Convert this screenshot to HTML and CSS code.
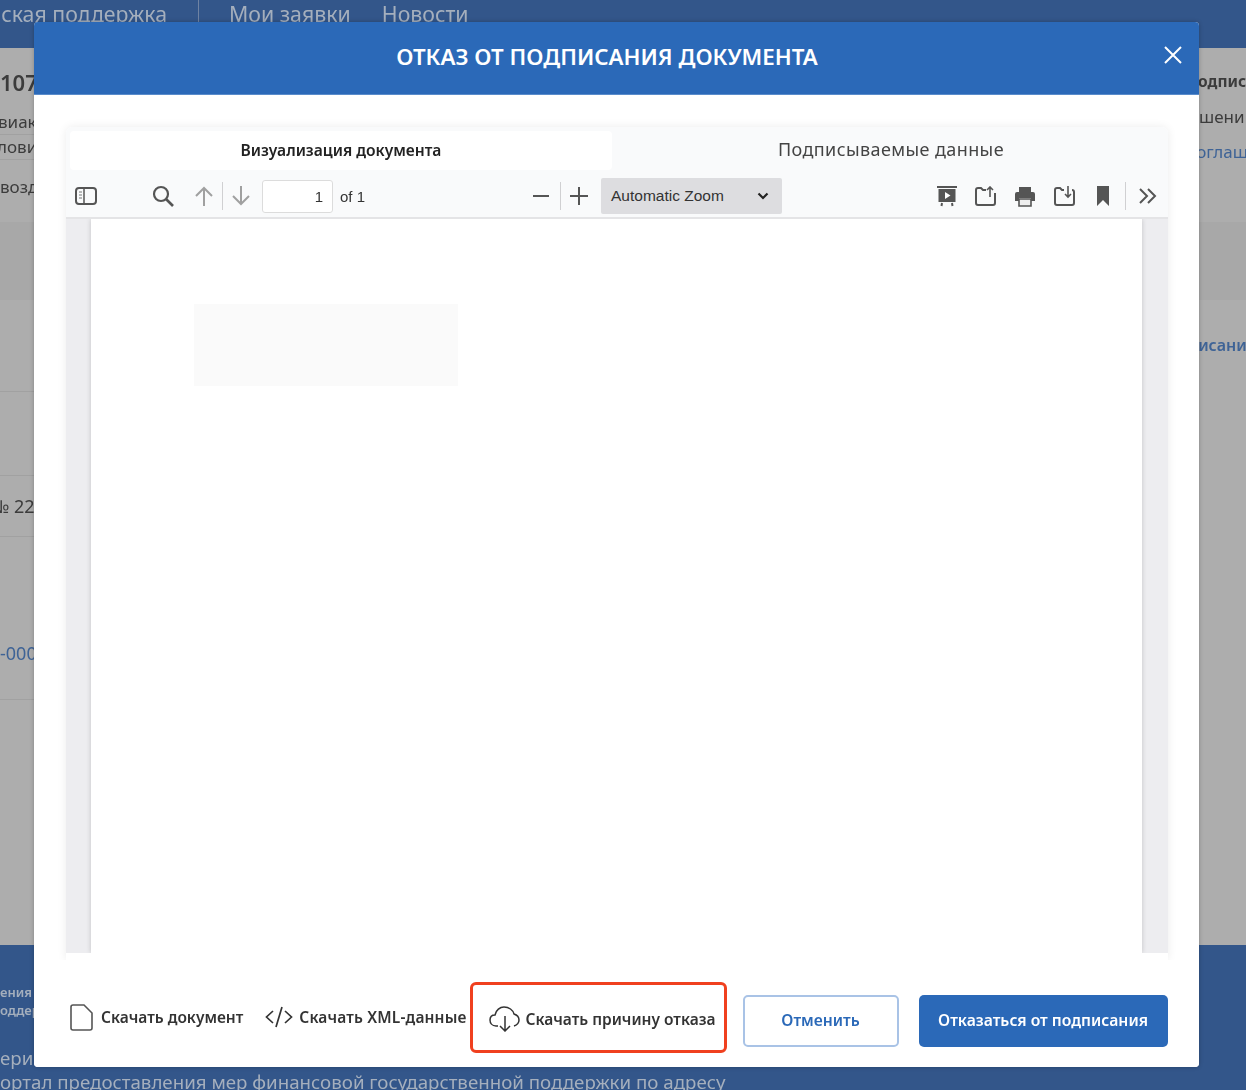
FILE: index.html
```html
<!DOCTYPE html>
<html>
<head>
    <title>Отказ от подписания документа</title>
    <link rel="stylesheet" href="styles.css">
</head>
<body>
    <div class="page">
        <nav class="topnav">
            <span class="nav-first">ская поддержка</span>
            <span class="nav-sep"></span>
            <span class="nav-link">Мои заявки</span>
            <span class="nav-link">Новости</span>
        </nav>
        <div class="content">
            <div class="col-left">
                <div class="cell num">107</div>
                <div class="cell avia line">виак</div>
                <div class="cell cond line">лови</div>
                <div class="cell vozd">возд</div>
                <div class="cell band"></div>
                <div class="cell row92 line"></div>
                <div class="cell row84 line"></div>
                <div class="cell dogovor line">№ 22</div>
                <div class="cell link-num line">-000</div>
            </div>
            <div class="col-right">
                <div class="cell podp">подпис</div>
                <div class="cell resh">шени</div>
                <div class="cell sogl">соглаш</div>
                <div class="cell band-right"></div>
                <div class="cell podp-link">писани</div>
            </div>
        </div>
        <footer class="bottom">
            <div class="small-text">ения</div>
            <div class="small-text">оддер</div>
            <div class="big-text first">ериал</div>
            <div class="big-text">ортал предоставления мер финансовой государственной поддержки по адресу</div>
        </footer>
    </div>

    <div class="modal">
        <div class="modal-head">
            <h1>ОТКАЗ ОТ ПОДПИСАНИЯ ДОКУМЕНТА</h1>
            <svg class="close" width="18" height="18" viewBox="0 0 18 18"><path d="M1 1 L17 17 M17 1 L1 17" stroke="#fff" stroke-width="2" fill="none"/></svg>
        </div>
        <div class="modal-body">
            <div class="viewer">
                <div class="tabs">
                    <div class="tab active">Визуализация документа</div>
                    <div class="tab">Подписываемые данные</div>
                </div>
                <div class="toolbar">
                    <svg class="tb-sidebar" width="22" height="18" viewBox="0 0 22 18"><rect x="1" y="1" width="20" height="16" rx="3" fill="none" stroke="#555" stroke-width="2"/><path d="M9 1 V17" stroke="#555" stroke-width="1.5"/><path d="M4 5 H7 M4 8 H7 M4 11 H7" stroke="#777" stroke-width="1.2"/></svg>
                    <svg class="tb-search" width="24" height="24" viewBox="0 0 24 24"><circle cx="10" cy="10" r="7" fill="none" stroke="#555" stroke-width="2.2"/><path d="M15 15 L22 22" stroke="#555" stroke-width="2.6"/></svg>
                    <svg class="tb-up" width="20" height="20" viewBox="0 0 20 20"><path d="M10 20 V2 M2 10 L10 2 L18 10" fill="none" stroke="#a0a0a0" stroke-width="2"/></svg>
                    <span class="tb-sep sep-page"></span>
                    <svg class="tb-down" width="20" height="20" viewBox="0 0 20 20"><path d="M10 0 V18 M2 10 L10 18 L18 10" fill="none" stroke="#a0a0a0" stroke-width="2"/></svg>
                    <div class="page-input">1</div>
                    <span class="page-of">of 1</span>
                    <svg class="tb-minus" width="16" height="16" viewBox="0 0 16 16"><path d="M0 8 H16" stroke="#555" stroke-width="2"/></svg>
                    <span class="tb-sep sep-zoom"></span>
                    <svg class="tb-plus" width="18" height="18" viewBox="0 0 18 18"><path d="M0 9 H18 M9 0 V18" stroke="#555" stroke-width="2"/></svg>
                    <div class="zoom-select">
                        <span>Automatic Zoom</span>
                        <svg width="12" height="8" viewBox="0 0 12 8"><path d="M1.5 1.5 L6 6 L10.5 1.5" fill="none" stroke="#222" stroke-width="2.2"/></svg>
                    </div>
                    <div class="tb-right">
                        <svg width="20" height="22" viewBox="0 0 20 22"><path d="M0 2 H20" stroke="#555" stroke-width="2"/><rect x="1.5" y="4" width="17" height="13" fill="#555"/><path d="M8 7 L13.5 10.5 L8 14 Z" fill="#fff"/><path d="M5 18 L4.5 21 M15 18 L15.5 21" stroke="#555" stroke-width="2"/></svg>
                        <svg width="21" height="20" viewBox="0 0 21 20"><path d="M11 4 H8 L6 2 H3 Q1 2 1 4 V17 Q1 19 3 19 H18 Q20 19 20 17 V7" fill="none" stroke="#555" stroke-width="2"/><path d="M15 11 V1 M12 4 L15 1 L18 4" fill="none" stroke="#555" stroke-width="1.6"/></svg>
                        <svg width="22" height="21" viewBox="0 0 22 21"><path d="M5 6 V1 H17 V6 Z" fill="#555"/><path d="M3 6 H19 Q21 6 21 8 V15 H17 V12 H5 V15 H1 V8 Q1 6 3 6 Z" fill="#555"/><path d="M5 13 H17 V20 H5 Z" fill="#eee" stroke="#555" stroke-width="1.6"/></svg>
                        <svg width="21" height="20" viewBox="0 0 21 20"><path d="M10 4 H8 L6 2 H3 Q1 2 1 4 V17 Q1 19 3 19 H18 Q20 19 20 17 V6 Q20 4 18 4" fill="none" stroke="#555" stroke-width="2"/><path d="M14 0 V11 M11 8 L14 11 L17 8" fill="none" stroke="#555" stroke-width="1.6"/></svg>
                        <svg class="tb-bookmark" width="12" height="20" viewBox="0 0 12 20"><path d="M0 0 H12 V20 L6 14 L0 20 Z" fill="#555"/></svg>
                        <span class="tb-sep sep-more"></span>
                        <svg class="tb-more" width="18" height="16" viewBox="0 0 18 16"><path d="M1 1 L8 8 L1 15 M9 1 L16 8 L9 15" fill="none" stroke="#555" stroke-width="2"/></svg>
                    </div>
                </div>
                <div class="doc-area">
                    <div class="doc-page">
                        <div class="doc-stamp"></div>
                    </div>
                </div>
            </div>
        </div>
        <div class="modal-foot">
            <a class="dl-link dl-doc">
                <svg width="23" height="27" viewBox="0 0 23 27"><path d="M3 1 H14 L22 9 V24 Q22 26 20 26 H3 Q1 26 1 24 V3 Q1 1 3 1 Z" fill="none" stroke="#555" stroke-width="1.6"/></svg>
                Скачать документ
            </a>
            <a class="dl-link dl-xml">
                <svg width="28" height="22" viewBox="0 0 28 22"><path d="M8 5 L1.5 11 L8 17 M20 5 L26.5 11 L20 17 M17 1 L11 21" fill="none" stroke="#333" stroke-width="1.7"/></svg>
                Скачать XML-данные
            </a>
            <a class="dl-link dl-reason">
                <svg width="31" height="26" viewBox="0 0 31 26"><path d="M9 20 H7 C3 20 1 17 1 14 C1 11 3 9 6 9 C7 4 11 1 15 1 C20 1 24 4 25 8 C28 9 30 11 30 14 C30 17 28 19 25 20" fill="none" stroke="#333" stroke-width="1.5"/><path d="M16 10 V25 M11 20 L16 25 L21 20" fill="none" stroke="#333" stroke-width="1.5"/></svg>
                Скачать причину отказа
            </a>
            <button class="btn btn-cancel">Отменить</button>
            <button class="btn btn-reject">Отказаться от подписания</button>
        </div>
    </div>
</body>
</html>
```

FILE: styles.css
```css
* {
    box-sizing: border-box;
}
body {
    margin: 0;
    width: 1246px;
    height: 1090px;
    overflow: hidden;
    position: relative;
    font-family: "Noto Sans", sans-serif;
    color: #222;
    background-color: #adadad;
}

/* dimmed page behind the dialog */
.page {
    height: 1090px;
    display: flex;
    flex-direction: column;
    filter: blur(0.5px);
}
.topnav {
    height: 48px;
    flex: none;
    background-color: #33568a;
    color: #a5afbd;
    font-size: 21.3px;
    display: flex;
    align-items: flex-start;
    overflow: hidden;
    white-space: nowrap;
}
.nav-first {
    width: 167px;
    flex: none;
    text-align: right;
    line-height: 27px;
}
.nav-sep {
    width: 1px;
    height: 22px;
    margin: 0 30px 0 31px;
    background-color: #6f83a3;
}
.nav-link {
    margin-right: 31px;
    line-height: 27px;
}
.content {
    height: 897px;
    flex: none;
    display: flex;
    justify-content: space-between;
    background-color: #adadad;
    color: #3c3c3c;
    font-size: 17px;
    white-space: nowrap;
}
.col-left {
    width: 40px;
    overflow: hidden;
}
.col-right {
    width: 58px;
    overflow: hidden;
}
.cell {
    line-height: 24px;
}
.line {
    border-bottom: 1px solid #a1a1a1;
}
.num {
    height: 60px;
    padding-top: 20px;
    font-size: 22px;
    font-weight: 600;
    line-height: 28px;
}
.avia {
    height: 27px;
    padding-top: 2px;
    text-indent: -2px;
}
.cond {
    height: 25px;
    text-indent: -3px;
}
.vozd {
    height: 62px;
    padding-top: 15px;
}
.band {
    height: 78px;
    background-color: #a8a8a8;
}
.row92 {
    height: 92px;
}
.row84 {
    height: 84px;
}
.dogovor {
    height: 61px;
    line-height: 60px;
    text-indent: -9px;
    font-size: 18px;
}
.link-num {
    height: 163px;
    padding-top: 104px;
    color: #3e6396;
    font-size: 18px;
}
.podp {
    height: 45px;
    padding-top: 21px;
    font-weight: 700;
    font-size: 15.5px;
}
.resh {
    height: 36px;
    padding-top: 12px;
    padding-left: 11px;
}
.sogl {
    height: 93px;
    padding-top: 11px;
    color: #3e6396;
}
.band-right {
    height: 78px;
    background-color: #a8a8a8;
}
.podp-link {
    padding-top: 33px;
    color: #3e6396;
    font-weight: 600;
    font-size: 16px;
}
.bottom {
    flex: 1;
    background-color: #33568a;
    color: #a5afbd;
    white-space: nowrap;
    overflow: hidden;
}
.small-text {
    font-size: 13px;
    font-weight: 600;
    line-height: 18px;
}
.small-text:first-child {
    margin-top: 38px;
}
.big-text {
    font-size: 18.72px;
    line-height: 24px;
}
.big-text.first {
    margin-top: 27px;
}

/* dialog */
.modal {
    position: absolute;
    left: 34px;
    top: 22px;
    width: 1165px;
    height: 1045px;
    background-color: #fff;
    border-radius: 4px;
    display: flex;
    flex-direction: column;
    overflow: hidden;
    box-shadow: 0 0 4px rgba(0, 0, 0, 0.25);
    filter: blur(0.4px);
}
.modal-head {
    height: 73px;
    flex: none;
    display: flex;
    align-items: center;
    padding: 0 17px 3px 0;
    background-color: #2b69b8;
    border-bottom: 1px solid #5a8ccb;
}
.modal-head h1 {
    flex: 1;
    margin: 0;
    padding-left: 16px;
    text-align: center;
    color: #fff;
    font-size: 22.3px;
    font-weight: 600;
}
.close {
    margin-top: -3px;
}
.modal-body {
    height: 865px;
    flex: none;
    padding: 32px 31px 0 32px;
}
.viewer {
    height: 833px;
    background-color: #fff;
    box-shadow: 0 0 10px rgba(0, 0, 0, 0.08);
    border-radius: 6px 6px 0 0;
}
.tabs {
    display: flex;
    height: 43px;
    padding: 4px 0 0 4px;
    background-color: #f9fafb;
    border-radius: 6px 6px 0 0;
}
.tab {
    flex: 1;
    text-align: center;
    line-height: 36px;
    font-size: 18px;
    letter-spacing: 0.4px;
    color: #444;
}
.tab.active {
    flex: none;
    width: 542px;
    background-color: #fff;
    color: #222;
    font-weight: 600;
    font-size: 15.6px;
    letter-spacing: 0;
    line-height: 38px;
    border-radius: 4px;
    margin-right: 2px;
}
.toolbar {
    height: 49px;
    padding-top: 5px;
    display: flex;
    align-items: center;
    background-color: #f9fafb;
    border-bottom: 2px solid #e4e4e6;
    font-family: "Liberation Sans", Arial, sans-serif;
}
.toolbar svg {
    flex: none;
}
.tb-sidebar {
    margin-left: 9px;
}
.tb-search {
    margin-left: 54px;
}
.tb-up {
    margin-left: 19px;
}
.tb-sep {
    width: 1px;
    height: 28px;
    flex: none;
    background-color: #d0d0d2;
}
.sep-page {
    margin-left: 8px;
}
.tb-down {
    margin-left: 8px;
}
.page-input {
    width: 71px;
    height: 33px;
    margin-left: 11px;
    padding-right: 9px;
    background-color: #fff;
    border: 1px solid #dcdcdc;
    border-radius: 3px;
    text-align: right;
    font-size: 15px;
    line-height: 31px;
    color: #333;
}
.page-of {
    margin-left: 7px;
    font-size: 15px;
    color: #333;
}
.tb-minus {
    margin-left: 168px;
}
.sep-zoom {
    margin-left: 11px;
}
.tb-plus {
    margin-left: 9px;
}
.zoom-select {
    width: 181px;
    height: 36px;
    margin-left: 13px;
    padding: 0 13px 0 10px;
    display: flex;
    align-items: center;
    justify-content: space-between;
    background-color: #dddde0;
    border-radius: 2px;
    font-size: 15.5px;
    color: #333;
}
.tb-right {
    margin-left: auto;
    padding-right: 11px;
    display: flex;
    align-items: center;
    gap: 18px;
}
.tb-bookmark {
    margin-left: 4px;
}
.sep-more {
    margin-left: -2px;
}
.tb-more {
    margin-left: -5px;
}
.doc-area {
    height: 734px;
    padding: 0 26px 0 25px;
    background-color: #ededf0;
    overflow: hidden;
}
.doc-page {
    height: 734px;
    padding: 85px 0 0 103px;
    background-color: #fff;
    box-shadow: 0 0 5px rgba(0, 0, 0, 0.18);
}
.doc-stamp {
    width: 264px;
    height: 82px;
    background-color: #fafafa;
}
.modal-foot {
    flex: 1;
    display: flex;
    align-items: center;
    padding: 15px 31px 0 36px;
    background-color: #fff;
}
.dl-link {
    display: flex;
    align-items: center;
    font-size: 15.5px;
    font-weight: 600;
    color: #333;
    white-space: nowrap;
}
.dl-doc svg {
    margin-right: 8px;
}
.dl-xml {
    margin-left: 22px;
    letter-spacing: 0.15px;
}
.dl-xml svg {
    margin-right: 6px;
}
.dl-doc,
.dl-xml {
    margin-bottom: 8px;
}
.dl-reason {
    width: 257px;
    height: 71px;
    margin: 0 0 7px 3px;
    padding: 3px 0 0 16px;
    gap: 6px;
    border: 3px solid #f0401f;
    border-radius: 6px;
}
.btn {
    height: 52px;
    padding: 0 0 2px;
    border-radius: 5px;
    font-family: "Noto Sans", sans-serif;
    font-size: 15.7px;
    font-weight: 600;
}
.btn-cancel {
    width: 156px;
    margin-left: 16px;
    background-color: #fff;
    border: 2px solid #a9c3e6;
    color: #2b69b8;
}
.btn-reject {
    width: 249px;
    margin-left: 20px;
    background-color: #2b69b8;
    border: none;
    color: #fff;
}
```
